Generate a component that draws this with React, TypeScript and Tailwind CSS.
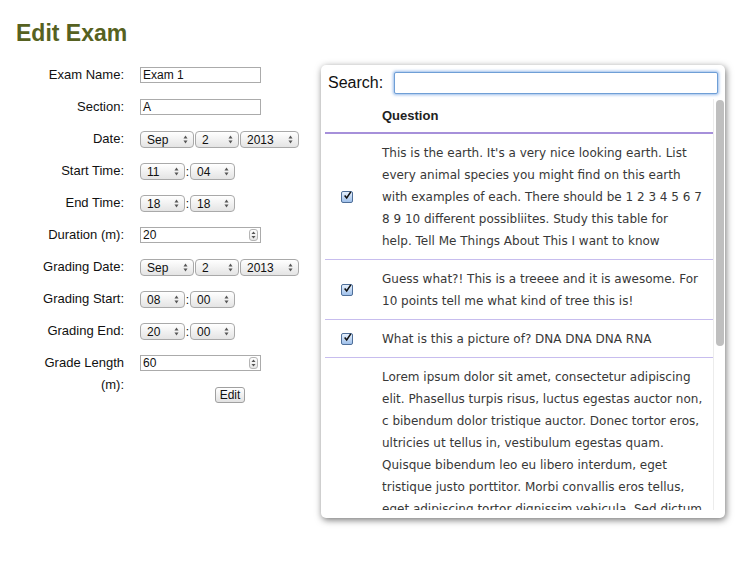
import React from "react";

const font = { fontFamily: '"Liberation Sans", Arial, sans-serif' };
const tableFont = { fontFamily: '"DejaVu Sans", "Liberation Sans", sans-serif' };

function Arrows() {
  return (
    <svg width="5" height="9" viewBox="0 0 5 9" className="shrink-0">
      <path d="M2.5 0.5 L4.5 3.5 L0.5 3.5 Z" fill="#555" />
      <path d="M2.5 8.5 L4.5 5.5 L0.5 5.5 Z" fill="#555" />
    </svg>
  );
}

function Select({ value, width }: { value: string; width: string }) {
  return (
    <div
      className={`${width} flex h-[17px] items-center justify-between rounded-[4px] border border-[#a9a9a9] bg-gradient-to-b from-white to-[#e4e4e4] pl-[6px] pr-[5px] text-[12px] leading-none text-[#111]`}
    >
      <span>{value}</span>
      <Arrows />
    </div>
  );
}

function DateSelect({ m, d, y }: { m: string; d: string; y: string }) {
  return (
    <div className="flex gap-[1px]">
      <Select value={m} width="w-[54px]" />
      <Select value={d} width="w-[44px]" />
      <Select value={y} width="w-[59px]" />
    </div>
  );
}

function TimeSelect({ h, m }: { h: string; m: string }) {
  return (
    <div className="flex items-center">
      <Select value={h} width="w-[45px]" />
      <span className="w-[5px] text-center text-[12px] leading-none">:</span>
      <Select value={m} width="w-[45px]" />
    </div>
  );
}

function TextInput({ value }: { value: string }) {
  return (
    <div className="flex h-[16px] w-[121px] items-center border border-[#ababab] bg-white px-[2px] text-[12px] leading-none text-[#111]">
      {value}
    </div>
  );
}

function NumberInput({ value }: { value: string }) {
  return (
    <div className="flex h-[16px] w-[121px] items-center justify-between border border-[#ababab] bg-white pl-[2px] pr-[2px] text-[12px] leading-none text-[#111]">
      <span>{value}</span>
      <div className="flex h-[12px] w-[9px] items-center justify-center rounded-[3px] border border-[#b5b5b5] bg-gradient-to-b from-white to-[#e6e6e6]">
        <svg width="5" height="8" viewBox="0 0 5 8">
          <path d="M2.5 0.5 L4.5 3 L0.5 3 Z" fill="#555" />
          <path d="M2.5 7.5 L4.5 5 L0.5 5 Z" fill="#555" />
        </svg>
      </div>
    </div>
  );
}

function Row({ label, children }: { label: string; children: React.ReactNode }) {
  return (
    <div className="flex min-h-[32px] items-start">
      <div className="w-[88px] pt-[5px] text-right text-[13px] leading-[22px] text-[#111]">{label}</div>
      <div className="ml-[16px] pt-[8px]">{children}</div>
    </div>
  );
}

function Check() {
  return (
    <div className="flex h-[12px] w-[12px] items-center justify-center rounded-[2px] border border-[#4f6f99] bg-gradient-to-b from-[#e6f0fc] to-[#9fc0ea]">
      <svg width="11" height="11" viewBox="0 0 11 11" className="-mt-[2px] ml-[1px]">
        <path d="M2 5.5 L4.5 8.5 L9.5 1" stroke="#111" strokeWidth="1.9" fill="none" />
      </svg>
    </div>
  );
}

const questions = [
  {
    checked: true,
    lines: [
      "This is the earth. It's a very nice looking earth. List",
      "every animal species you might find on this earth",
      "with examples of each. There should be 1 2 3 4 5 6 7",
      "8 9 10 different possibliites. Study this table for",
      "help. Tell Me Things About This I want to know",
    ],
  },
  {
    checked: true,
    lines: ["Guess what?! This is a treeee and it is awesome. For", "10 points tell me what kind of tree this is!"],
  },
  { checked: true, lines: ["What is this a picture of? DNA DNA DNA RNA"] },
  {
    checked: false,
    lines: [
      "Lorem ipsum dolor sit amet, consectetur adipiscing",
      "elit. Phasellus turpis risus, luctus egestas auctor non,",
      "c bibendum dolor tristique auctor. Donec tortor eros,",
      "ultricies ut tellus in, vestibulum egestas quam.",
      "Quisque bibendum leo eu libero interdum, eget",
      "tristique justo porttitor. Morbi convallis eros tellus,",
      "eget adipiscing tortor dignissim vehicula. Sed dictum",
    ],
  },
];

export default function App() {
  return (
    <div className="min-h-[581px] w-[740px] bg-white" style={font}>
      <h1 className="pl-[16px] pt-[18px] text-[23px] font-bold leading-[30px] text-[#566121]">Edit Exam</h1>

      <div className="mt-[11px] flex items-start">
        <div className="w-[321px] pl-[36px]">
          <Row label="Exam Name:">
            <TextInput value="Exam 1" />
          </Row>
          <Row label="Section:">
            <TextInput value="A" />
          </Row>
          <Row label="Date:">
            <DateSelect m="Sep" d="2" y="2013" />
          </Row>
          <Row label="Start Time:">
            <TimeSelect h="11" m="04" />
          </Row>
          <Row label="End Time:">
            <TimeSelect h="18" m="18" />
          </Row>
          <Row label="Duration (m):">
            <NumberInput value="20" />
          </Row>
          <Row label="Grading Date:">
            <DateSelect m="Sep" d="2" y="2013" />
          </Row>
          <Row label="Grading Start:">
            <TimeSelect h="08" m="00" />
          </Row>
          <Row label="Grading End:">
            <TimeSelect h="20" m="00" />
          </Row>
          <Row label="Grade Length (m):">
            <div className="flex flex-col">
              <NumberInput value="60" />
              <button className="ml-[75px] mt-[16px] flex h-[16px] w-[30px] items-center justify-center rounded-[3px] border border-[#a0a0a0] bg-gradient-to-b from-white to-[#e2e2e2] text-[12px] leading-none text-[#111]">
                Edit
              </button>
            </div>
          </Row>
        </div>

        <div className="mt-[6px] flex h-[453px] w-[404px] flex-col rounded-[5px] bg-white shadow-[1px_2px_7px_rgba(0,0,0,0.55)]">
          <div className="flex items-center pl-[7px] pt-[7px]">
            <span className="text-[16px] leading-none text-[#111]">Search:</span>
            <div className="ml-[11px] h-[22px] w-[324px] rounded-[2px] border border-[#6f9fd6] bg-white shadow-[0_0_3px_1px_rgba(110,160,225,0.7)]" />
          </div>

          <div className="ml-[4px] mt-[5px] flex h-[411px] w-[400px]">
            <div className="w-[388px] overflow-hidden">
              <div className="flex h-[35px] items-center border-b-2 border-[#a690da]">
                <div className="w-[42px] shrink-0" />
                <div className="pl-[15px] text-[13px] font-bold text-[#222]">Question</div>
              </div>
              {questions.map((q, i) => (
                <div key={i} className="flex items-center border-b border-[#c7bdee]">
                  <div className="flex w-[42px] shrink-0 justify-center pl-[1px]">{q.checked && <Check />}</div>
                  <div className="min-w-0 flex-1 pb-[7px] pl-[15px] pt-[8px] text-[12px] leading-[22px] text-[#383838]" style={tableFont}>
                    {q.lines.map((l, j) => (
                      <div key={j} className="whitespace-nowrap">
                        {l}
                      </div>
                    ))}
                  </div>
                </div>
              ))}
            </div>
            <div className="w-[12px] border-l border-[#ececec] bg-white pl-[2px] pt-[1px]">
              <div className="h-[246px] w-[8px] rounded-full bg-[#bfbfbf]" />
            </div>
          </div>
        </div>
      </div>
    </div>
  );
}
